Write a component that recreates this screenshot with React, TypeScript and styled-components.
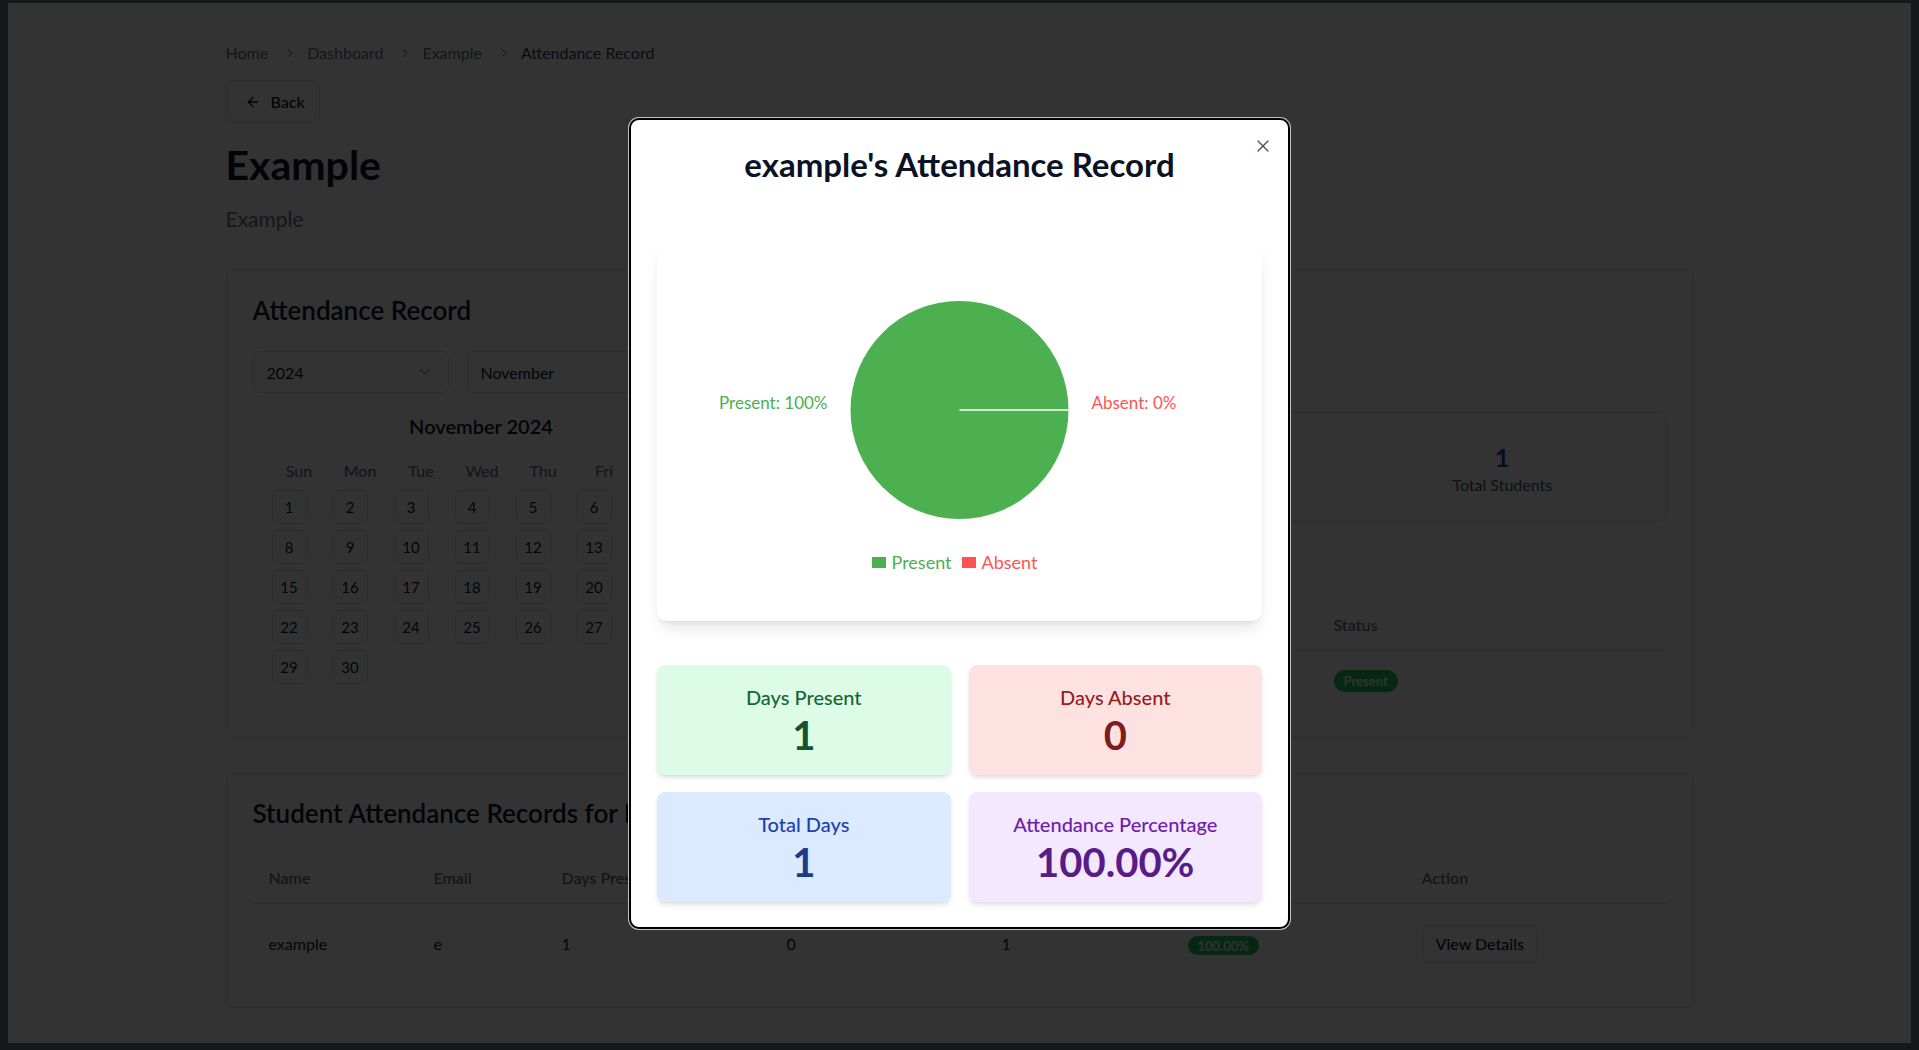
import React from "react";
import styled, { createGlobalStyle } from "styled-components";
import { ArrowLeft, ChevronRight, ChevronDown, X } from "lucide-react";

const GlobalStyle = createGlobalStyle`
  html, body { margin: 0; padding: 0; background: #141819; }
  body { font-family: Lato, "Open Sans", "Noto Sans", sans-serif; }
  *, *::before, *::after { box-sizing: border-box; }
`;

const Frame = styled.div`
  position: relative;
  margin: 3px 8px 7px 8px;
  height: 1040px;
  background: #ffffff;
  overflow: hidden;
  color: #111827;
  font-family: Lato, "Open Sans", "Noto Sans", sans-serif;
`;

const Container = styled.main`
  width: 1468px;
  margin: 0 auto;
  padding-top: 38px;
`;

const Crumbs = styled.nav`
  display: flex;
  align-items: center;
  height: 24px;
  font-size: 16px;
  line-height: 24px;
`;

const Crumb = styled.span<{ $current?: boolean }>`
  color: ${(p) => (p.$current ? "#374151" : "#6b7280")};
`;

const Sep = styled.span`
  display: inline-flex;
  margin: 0 10px 0 15px;
  color: #9ca3af;
`;

const BackButton = styled.button`
  margin-top: 15px;
  width: 94px;
  height: 43px;
  display: inline-flex;
  align-items: center;
  gap: 10px;
  padding: 0 0 0 18px;
  background: #fff;
  border: 1px solid #e5e7eb;
  border-radius: 6px;
  font: 500 16px/24px Lato, sans-serif;
  color: #111827;
`;

const PageTitle = styled.h1`
  margin: 18px 0 0;
  font-size: 41px;
  line-height: 48px;
  font-weight: 700;
  color: #0f172a;
`;

const PageSub = styled.p`
  margin: 16px 0 0;
  font-size: 21px;
  line-height: 28px;
  color: #6b7280;
`;

const Card = styled.section<{ $mt: number; $pad: string }>`
  margin-top: ${(p) => p.$mt}px;
  border: 1px solid #e5e7eb;
  border-radius: 8px;
  padding: ${(p) => p.$pad};
  background: #fff;
`;

const CardTitle = styled.h2`
  margin: 0;
  font-size: 26px;
  line-height: 32px;
  font-weight: 600;
  color: #0f172a;
  white-space: nowrap;
`;

const SelectRow = styled.div`
  margin-top: 25px;
  display: flex;
  gap: 18px;
`;

const SelectBox = styled.div`
  width: 196px;
  height: 42px;
  display: flex;
  align-items: center;
  justify-content: space-between;
  padding: 0 15px 0 13px;
  border: 1px solid #e5e7eb;
  border-radius: 6px;
  font-size: 16px;
  color: #111827;
  svg { color: #9ca3af; }
`;

const BodyGrid = styled.div`
  margin-top: 19px;
  display: grid;
  grid-template-columns: 457px 1fr;
  gap: 24px;
`;

const MonthTitle = styled.h3`
  margin: 0;
  text-align: center;
  font-size: 20px;
  line-height: 28px;
  font-weight: 600;
  color: #111827;
`;

const WeekRow = styled.div`
  margin: 19px 14px 0 16px;
  display: grid;
  grid-template-columns: repeat(7, 1fr);
  text-align: center;
  font-size: 16px;
  line-height: 24px;
  font-weight: 500;
  color: #6b7280;
`;

const DaysGrid = styled.div`
  margin: 7px 14px 0 16px;
  display: grid;
  grid-template-columns: repeat(7, 1fr);
  row-gap: 6px;
`;

const DayCell = styled.div`
  width: 35px;
  height: 34px;
  margin-left: 3px;
  display: flex;
  align-items: center;
  justify-content: center;
  border: 1px solid #e5e7eb;
  border-radius: 6px;
  font-size: 15px;
  color: #111827;
`;

const RightCol = styled.div`
  display: flex;
  flex-direction: column;
`;

const SummaryBox = styled.div`
  height: 110px;
  border: 1px solid #e5e7eb;
  border-radius: 8px;
  padding: 28px 24px 0;
  display: grid;
  grid-template-columns: repeat(3, 1fr);
  gap: 24px;
  align-content: start;
`;

const SummaryItem = styled.div`
  text-align: center;
`;

const SummaryValue = styled.div<{ $color: string }>`
  font-size: 25px;
  line-height: 32px;
  font-weight: 700;
  color: ${(p) => p.$color};
`;

const SummaryLabel = styled.div`
  font-size: 16px;
  line-height: 24px;
  color: #4b5563;
`;

const SubHeading = styled.h3`
  margin: 24px 0 0;
  font-size: 20px;
  line-height: 28px;
  font-weight: 600;
`;

const Table = styled.table<{ $mt: number }>`
  margin-top: ${(p) => p.$mt}px;
  width: 100%;
  border-collapse: collapse;
  table-layout: fixed;
`;

const Th = styled.th<{ $pad: string }>`
  text-align: left;
  padding: ${(p) => p.$pad};
  font-size: 16px;
  line-height: 24px;
  font-weight: 600;
  color: #6b7280;
  border-bottom: 1px solid #e5e7eb;
  white-space: nowrap;
  overflow: hidden;
`;

const Td = styled.td<{ $pad: string }>`
  padding: ${(p) => p.$pad};
  font-size: 16px;
  line-height: 24px;
  color: #111827;
  vertical-align: middle;
`;

const Badge = styled.span<{ $h: number }>`
  display: inline-flex;
  align-items: center;
  height: ${(p) => p.$h}px;
  padding: 0 10px;
  border-radius: 999px;
  background: #22c55e;
  color: #f0fdf4;
  font-size: 13px;
  font-weight: 700;
  vertical-align: middle;
`;

const OutlineButton = styled.button`
  height: 38px;
  padding: 0 13px;
  background: #fff;
  border: 1px solid #e5e7eb;
  border-radius: 6px;
  font: 500 16px/24px Lato, sans-serif;
  color: #111827;
`;

const Overlay = styled.div`
  position: absolute;
  inset: 0;
  background: rgba(0, 0, 0, 0.8);
  display: flex;
  align-items: center;
  justify-content: center;
`;

const Modal = styled.div`
  position: relative;
  width: 661px;
  background: #fff;
  border: 2px solid #000;
  border-radius: 10px;
  box-shadow: 0 0 0 1px #c4c4c4;
  padding: 24px 26px 25px;
`;

const CloseButton = styled.button`
  position: absolute;
  top: 16px;
  right: 15px;
  width: 20px;
  height: 20px;
  padding: 0;
  border: none;
  background: none;
  color: #4b5563;
  display: flex;
`;

const ModalTitle = styled.h2`
  margin: 0 0 60px;
  text-align: center;
  font-size: 33px;
  line-height: 40px;
  font-weight: 700;
  color: #0b1224;
`;

const ChartCard = styled.div`
  background: #fff;
  border-radius: 10px;
  box-shadow: 0 10px 15px -3px rgba(0, 0, 0, 0.1), 0 4px 6px -4px rgba(0, 0, 0, 0.1);
  padding: 16px 16px 46px;
  svg { display: block; }
`;

const Legend = styled.ul`
  margin: 10px 0 0;
  padding: 0;
  list-style: none;
  display: flex;
  justify-content: center;
  font-size: 18px;
  line-height: 24px;
  height: 25px;
`;

const LegendItem = styled.li<{ $color: string }>`
  display: inline-flex;
  align-items: center;
  margin-right: 10px;
  color: ${(p) => p.$color};
`;

const LegendSwatch = styled.span<{ $color: string }>`
  width: 14px;
  height: 11px;
  margin-right: 6px;
  background: ${(p) => p.$color};
`;

const StatsGrid = styled.div`
  margin-top: 44px;
  display: grid;
  grid-template-columns: 1fr 1fr;
  gap: 17px 18px;
`;

const StatCard = styled.div<{ $bg: string }>`
  background: ${(p) => p.$bg};
  border-radius: 8px;
  padding: 18px 16px 16px;
  text-align: center;
  box-shadow: 0 4px 6px -1px rgba(0, 0, 0, 0.1), 0 2px 4px -2px rgba(0, 0, 0, 0.1);
`;

const StatLabel = styled.div<{ $color: string }>`
  font-size: 20px;
  line-height: 28px;
  font-weight: 500;
  color: ${(p) => p.$color};
`;

const StatValue = styled.div<{ $color: string }>`
  font-size: 40px;
  line-height: 48px;
  font-weight: 700;
  color: ${(p) => p.$color};
`;

const WEEKDAYS = ["Sun", "Mon", "Tue", "Wed", "Thu", "Fri", "Sat"];
const PRESENT = "#4CAF50";
const ABSENT = "#FF5252";

const stats = [
  { label: "Days Present", value: "1", bg: "#dcfce7", lc: "#166534", vc: "#14532d" },
  { label: "Days Absent", value: "0", bg: "#fee2e2", lc: "#991b1b", vc: "#7f1d1d" },
  { label: "Total Days", value: "1", bg: "#dbeafe", lc: "#1e40af", vc: "#1e3a8a" },
  { label: "Attendance Percentage", value: "100.00%", bg: "#f3e8ff", lc: "#6b21a8", vc: "#581c87" },
];

function PieChart() {
  const cx = 286.5;
  const cy = 150;
  const r = 109;
  return (
    <svg width="573" height="280" viewBox="0 0 573 280">
      <circle cx={cx} cy={cy} r={r} fill={PRESENT} />
      <line x1={cx} y1={cy} x2={cx + r} y2={cy} stroke="#fff" strokeWidth="1.5" />
      <text x={cx - 132} y={cy - 1} textAnchor="end" fill={PRESENT} fontSize="17">
        Present: 100%
      </text>
      <text x={cx + 132} y={cy - 1} textAnchor="start" fill={ABSENT} fontSize="17">
        Absent: 0%
      </text>
    </svg>
  );
}

export default function App() {
  const days = Array.from({ length: 30 }, (_, i) => i + 1);
  return (
    <>
      <GlobalStyle />
      <Frame>
        <Container>
          <Crumbs>
            <Crumb>Home</Crumb>
            <Sep><ChevronRight size={14} /></Sep>
            <Crumb>Dashboard</Crumb>
            <Sep><ChevronRight size={14} /></Sep>
            <Crumb>Example</Crumb>
            <Sep><ChevronRight size={14} /></Sep>
            <Crumb $current>Attendance Record</Crumb>
          </Crumbs>
          <BackButton>
            <ArrowLeft size={16} />
            Back
          </BackButton>
          <PageTitle>Example</PageTitle>
          <PageSub>Example</PageSub>

          <Card $mt={36} $pad="24px 26px">
            <CardTitle>Attendance Record</CardTitle>
            <SelectRow>
              <SelectBox>
                2024
                <ChevronDown size={16} />
              </SelectBox>
              <SelectBox>
                November
                <ChevronDown size={16} />
              </SelectBox>
            </SelectRow>
            <BodyGrid>
              <div>
                <MonthTitle>November 2024</MonthTitle>
                <WeekRow>
                  {WEEKDAYS.map((d) => (
                    <span key={d}>{d}</span>
                  ))}
                </WeekRow>
                <DaysGrid>
                  {days.map((d) => (
                    <DayCell key={d}>{d}</DayCell>
                  ))}
                </DaysGrid>
              </div>
              <RightCol>
                <SummaryBox>
                  <SummaryItem>
                    <SummaryValue $color="#15803d">1</SummaryValue>
                    <SummaryLabel>Present</SummaryLabel>
                  </SummaryItem>
                  <SummaryItem>
                    <SummaryValue $color="#b91c1c">0</SummaryValue>
                    <SummaryLabel>Absent</SummaryLabel>
                  </SummaryItem>
                  <SummaryItem>
                    <SummaryValue $color="#1e40af">1</SummaryValue>
                    <SummaryLabel>Total Students</SummaryLabel>
                  </SummaryItem>
                </SummaryBox>
                <SubHeading>Daily Records</SubHeading>
                <Table $mt={26}>
                  <colgroup>
                    <col style={{ width: 292 }} />
                    <col style={{ width: 292 }} />
                    <col />
                  </colgroup>
                  <thead>
                    <tr>
                      <Th $pad="13px 16px">Date</Th>
                      <Th $pad="13px 16px">Student</Th>
                      <Th $pad="13px 16px">Status</Th>
                    </tr>
                  </thead>
                  <tbody>
                    <tr>
                      <Td $pad="16px 16px 21px">2024-11-01</Td>
                      <Td $pad="16px 16px 21px">example</Td>
                      <Td $pad="16px 16px 21px"><Badge $h={22}>Present</Badge></Td>
                    </tr>
                  </tbody>
                </Table>
              </RightCol>
            </BodyGrid>
          </Card>

          <Card $mt={35} $pad="23px 26px 23px">
            <CardTitle>Student Attendance Records for November 2024</CardTitle>
            <Table $mt={25}>
              <colgroup>
                <col style={{ width: 165 }} />
                <col style={{ width: 128 }} />
                <col style={{ width: 225 }} />
                <col style={{ width: 215 }} />
                <col style={{ width: 186 }} />
                <col style={{ width: 234 }} />
                <col />
              </colgroup>
              <thead>
                <tr>
                  <Th $pad="12px 16px 13px">Name</Th>
                  <Th $pad="12px 16px 13px">Email</Th>
                  <Th $pad="12px 16px 13px">Days Present</Th>
                  <Th $pad="12px 16px 13px">Days Absent</Th>
                  <Th $pad="12px 16px 13px">Total Days</Th>
                  <Th $pad="12px 16px 13px">Percentage</Th>
                  <Th $pad="12px 16px 13px">Action</Th>
                </tr>
              </thead>
              <tbody>
                <tr>
                  <Td $pad="21px 16px">example</Td>
                  <Td $pad="21px 16px">e</Td>
                  <Td $pad="21px 16px">1</Td>
                  <Td $pad="21px 16px">0</Td>
                  <Td $pad="21px 16px">1</Td>
                  <Td $pad="21px 16px"><Badge $h={19}>100.00%</Badge></Td>
                  <Td $pad="21px 16px"><OutlineButton>View Details</OutlineButton></Td>
                </tr>
              </tbody>
            </Table>
          </Card>
        </Container>

        <Overlay>
          <Modal>
            <CloseButton aria-label="Close">
              <X size={20} strokeWidth={1.6} />
            </CloseButton>
            <ModalTitle>example's Attendance Record</ModalTitle>
            <ChartCard>
              <PieChart />
              <Legend>
                <LegendItem $color={PRESENT}>
                  <LegendSwatch $color={PRESENT} />
                  Present
                </LegendItem>
                <LegendItem $color={ABSENT}>
                  <LegendSwatch $color={ABSENT} />
                  Absent
                </LegendItem>
              </Legend>
            </ChartCard>
            <StatsGrid>
              {stats.map((s) => (
                <StatCard key={s.label} $bg={s.bg}>
                  <StatLabel $color={s.lc}>{s.label}</StatLabel>
                  <StatValue $color={s.vc}>{s.value}</StatValue>
                </StatCard>
              ))}
            </StatsGrid>
          </Modal>
        </Overlay>
      </Frame>
    </>
  );
}
